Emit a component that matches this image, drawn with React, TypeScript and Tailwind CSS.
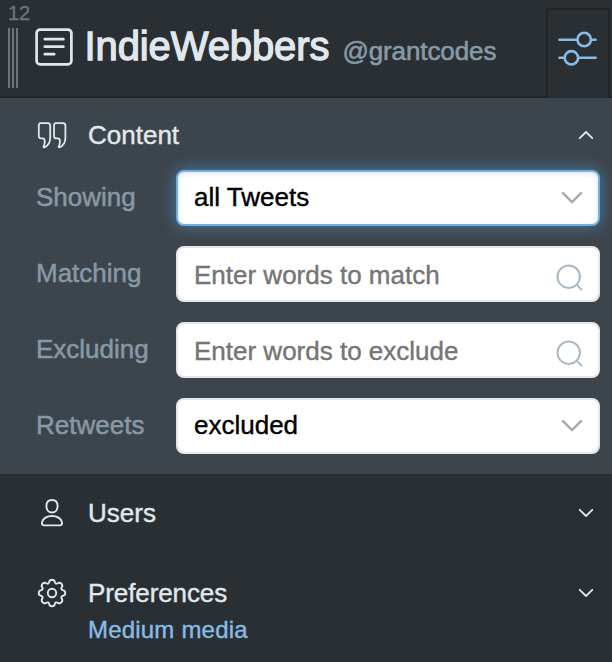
import React, { ReactNode } from "react";

function Chevron({ up = false }: { up?: boolean }) {
  return (
    <svg width="16" height="10" viewBox="0 0 16 10" fill="none" stroke="#e1e8ed" strokeWidth="1.8" strokeLinecap="round" strokeLinejoin="round">
      <path d={up ? "M1.7 8.2 8 2l6.3 6.2" : "M1.7 1.8 8 8l6.3-6.2"} />
    </svg>
  );
}

function SelectArrow() {
  return (
    <svg className="mr-[15px]" width="22" height="14" viewBox="0 0 22 14" fill="none" stroke="#aaaaaa" strokeWidth="2.5" strokeLinecap="round" strokeLinejoin="round">
      <path d="M2 2.200l9 9 9-9" />
    </svg>
  );
}

function SearchIcon() {
  return (
    <svg className="mt-[8px] mr-[15px]" width="28" height="28" viewBox="0 0 28 28" fill="none" stroke="#aab8c2" strokeWidth="2" strokeLinecap="round">
      <circle cx="13.7" cy="12.7" r="11.2" />
      <path d="M21.6 20.6 26.4 25.6" />
    </svg>
  );
}

function Field({ label, children, icon, focused = false }: { label: string; children: ReactNode; icon: ReactNode; focused?: boolean }) {
  return (
    <div className="flex h-14 pl-9 pr-3">
      <div className="w-[140px] pt-[12px] text-[26px] leading-[30px] text-[#8899a6] [-webkit-text-stroke:0.5px_currentColor]">{label}</div>
      <div
        className={
          "flex h-14 flex-1 items-center justify-between rounded-lg border-2 bg-white pl-4 text-[26px] leading-[30px] " +
          (focused ? "border-[#6cb0e8] shadow-[inset_0_2px_6px_rgba(0,0,0,0.1),0_0_16px_rgba(80,165,230,0.6)]" : "border-[#e1e8ed]")
        }
      >
        {children}
        {icon}
      </div>
    </div>
  );
}

export default function App() {
  return (
    <div className="flex h-[662px] w-[612px] flex-col overflow-hidden bg-[#292f33] font-['Liberation_Sans',Arial,sans-serif] whitespace-nowrap text-[#e1e8ed] [-webkit-text-stroke:0.4px_currentColor]">
      <header className="flex h-[98px] shrink-0">
        <div className="flex h-[98px] w-9 flex-col border-b-2 border-[#222426] pl-2">
          <div className="h-7 pt-[2px] text-[20px] leading-[23px] text-[#66757f]">12</div>
          <div className="flex h-[60px] gap-[2px]">
            <i className="w-[2px] bg-[#66757f]" />
            <i className="w-[2px] bg-[#66757f]" />
            <i className="w-[2px] bg-[#66757f]" />
          </div>
        </div>
        <div className="flex h-[98px] flex-1 border-b-2 border-[#222426]">
          <svg className="mt-7 -ml-px shrink-0" width="38" height="38" viewBox="0 0 38 38" fill="none" stroke="#e1e8ed" strokeWidth="2.7" strokeLinecap="round">
            <rect x="1.6" y="1.6" width="34.8" height="34.8" rx="3.5" />
            <path d="M9.8 11.2h18.6M9.8 18.7h18.6M9.8 26.2h9.4" />
          </svg>
          <h1 className="ml-[11.500px] pt-[23px] text-[40px] leading-[46px] tracking-[-0.1px] [-webkit-text-stroke:1.3px_currentColor]">IndieWebbers</h1>
          <span className="ml-[13px] pt-[36px] text-[26px] leading-[30px] tracking-[-0.1px] text-[#8899a6] [-webkit-text-stroke:0.6px_currentColor]">@grantcodes</span>
        </div>
        <div className="mt-2 flex h-[90px] w-16 justify-center border-x-2 border-t-2 border-[#222426] pt-[20px]">
          <svg width="42" height="40" viewBox="0 0 42 40" fill="none" stroke="#88bbe5" strokeWidth="2.6" strokeLinecap="round">
            <path d="M2.5 9.7h17.4M34.4 9.7h4.2M2.5 27.8h4.6M21.6 27.8h17" />
            <circle cx="27.2" cy="9.5" r="6.700" />
            <circle cx="14.4" cy="27.8" r="6.700" />
          </svg>
        </div>
        <div className="h-[98px] w-[2px] border-b-2 border-[#222426]" />
      </header>

      <section className="flex h-[376px] shrink-0 flex-col bg-[#3d454c]">
        <div className="flex h-[72px] pl-9 pr-[18px]">
          <svg className="mt-[23px]" width="32" height="30" viewBox="0 0 32 30" fill="none" stroke="#e1e8ed" strokeWidth="1.8" strokeLinejoin="round">
            <path d="M4.500 2.200h7.200c1.500 0 2.500 1 2.500 2.500v12c0 4.600-2 8-6 9.600-.5.2-.9-.2-.7-.7.8-1.600 1.300-3.200 1.300-5.300 0-1.800-.7-2.900-2.300-2.900h-1.500c-1.500 0-2.200-1-2.200-2.500V4.700c0-1.500.5-2.500 1.700-2.500Z" />
            <path d="M19.700 2.200h7.200c1.500 0 2.500 1 2.500 2.500v12c0 4.600-2 8-6 9.600-.5.2-.9-.2-.7-.7.8-1.600 1.300-3.200 1.300-5.300 0-1.800-.7-2.900-2.300-2.900h-1.500c-1.500 0-2.200-1-2.200-2.500V4.700c0-1.500.5-2.500 1.700-2.500Z" />
          </svg>
          <h2 className="ml-5 flex-1 pt-[22px] text-[26px] leading-[30px]">Content</h2>
          <div className="mt-8"><Chevron up /></div>
        </div>
        <div className="flex flex-col gap-5">
          <Field label="Showing" icon={<SelectArrow />} focused>
            <span className="mb-[2px] text-black">all Tweets</span>
          </Field>
          <Field label="Matching" icon={<SearchIcon />}>
            <span className="mt-[2px] text-[#757575]">Enter words to match</span>
          </Field>
          <Field label="Excluding" icon={<SearchIcon />}>
            <span className="mt-[2px] text-[#757575]">Enter words to exclude</span>
          </Field>
          <Field label="Retweets" icon={<SelectArrow />}>
            <span className="mb-[2px] text-black">excluded</span>
          </Field>
        </div>
      </section>

      <section className="flex h-20 shrink-0 pl-9 pr-[18px]">
        <svg className="mt-6" width="32" height="32" viewBox="0 0 32 32" fill="none" stroke="#e1e8ed" strokeWidth="1.9" strokeLinejoin="round">
          <path d="M16 2c3.700 0 5.600 2.600 5.600 6 0 3.800-2.100 6.500-5.600 6.500s-5.600-2.700-5.600-6.500C10.400 4.600 12.300 2 16 2Z" />
          <path d="M6 24.200C7.200 20.400 10.800 18 16 18s8.800 2.400 10 6.200c.4 1.900-.4 3.200-2 3.200H8c-1.600 0-2.400-1.300-2-3.200Z" />
        </svg>
        <h2 className="ml-5 flex-1 pt-6 text-[26px] leading-[30px]">Users</h2>
        <div className="mt-[34px]"><Chevron /></div>
      </section>
      <section className="flex h-[108px] shrink-0 pl-9 pr-[18px]">
        <svg className="mt-[23px]" width="32" height="32" viewBox="0 0 32 32" fill="none" stroke="#e1e8ed" strokeWidth="1.9" strokeLinejoin="round">
          <path d="M13.100 5.200C13.700 1.900 18.300 1.900 18.900 5.200Q19.500 7.400 21.600 6.300C24.300 4.400 27.600 7.700 25.700 10.400Q24.600 12.500 26.800 13.100C30.100 13.700 30.100 18.300 26.800 18.900Q24.600 19.500 25.700 21.600C27.600 24.300 24.300 27.600 21.600 25.700Q19.500 24.600 18.900 26.800C18.300 30.100 13.700 30.100 13.100 26.800Q12.500 24.600 10.400 25.700C7.700 27.600 4.400 24.300 6.300 21.600Q7.400 19.500 5.200 18.900C1.900 18.300 1.900 13.700 5.200 13.100Q7.400 12.500 6.300 10.400C4.400 7.700 7.700 4.400 10.400 6.300Q12.500 7.400 13.100 5.200Z" />
          <circle cx="16" cy="16" r="4.200" />
        </svg>
        <div className="ml-5 flex-1 pt-6">
          <h2 className="text-[26px] leading-[30px] tracking-[-0.1px]">Preferences</h2>
          <p className="mt-2 text-[24px] leading-[28px] tracking-[0.2px] text-[#88bbe5]">Medium media</p>
        </div>
        <div className="mt-[34px]"><Chevron /></div>
      </section>
    </div>
  );
}
